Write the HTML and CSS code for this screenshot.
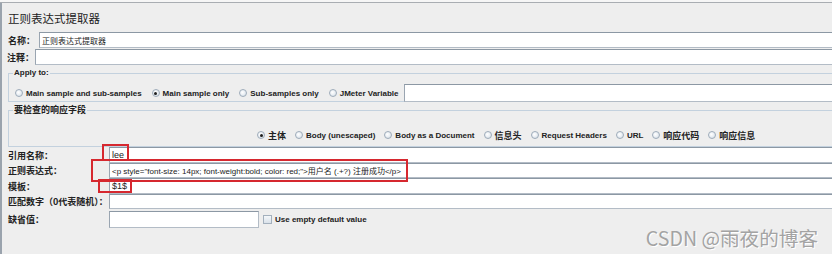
FILE: index.html
```html
<!DOCTYPE html>
<html>
<head>
<meta charset="utf-8">
<link rel="stylesheet" href="styles.css">
</head>
<body>
<div class="screen">
  <div class="topstrip"></div>
  <div class="panel">
    <div class="title">正则表达式提取器</div>
    <div class="row name-row">
      <span class="lbl cjk lbl-name">名称：</span>
      <div class="field"><span class="val-cjk">正则表达式提取器</span></div>
    </div>
    <div class="row comment-row">
      <span class="lbl cjk lbl-comment">注释：</span>
      <div class="field"></div>
    </div>

    <fieldset class="group group-apply">
      <legend class="legend-en">Apply to:</legend>
      <div class="radios radios-apply">
        <label class="opt"><span class="radio"></span><span class="txt">Main sample and sub-samples</span></label>
        <label class="opt"><span class="radio on"></span><span class="txt">Main sample only</span></label>
        <label class="opt"><span class="radio"></span><span class="txt">Sub-samples only</span></label>
        <label class="opt"><span class="radio"></span><span class="txt">JMeter Variable</span></label>
        <div class="field field-var"></div>
      </div>
    </fieldset>

    <fieldset class="group group-fields">
      <legend class="legend-cjk">要检查的响应字段</legend>
      <div class="radios radios-fields">
        <label class="opt"><span class="radio on"></span><span class="txt cjk">主体</span></label>
        <label class="opt"><span class="radio"></span><span class="txt">Body (unescaped)</span></label>
        <label class="opt"><span class="radio"></span><span class="txt">Body as a Document</span></label>
        <label class="opt"><span class="radio"></span><span class="txt cjk">信息头</span></label>
        <label class="opt"><span class="radio"></span><span class="txt">Request Headers</span></label>
        <label class="opt"><span class="radio"></span><span class="txt">URL</span></label>
        <label class="opt"><span class="radio"></span><span class="txt cjk">响应代码</span></label>
        <label class="opt"><span class="radio"></span><span class="txt cjk">响应信息</span></label>
      </div>
    </fieldset>

    <div class="form">
      <div class="frow r1"><span class="lbl cjk flbl">引用名称：</span><div class="field"><span class="val">lee</span></div></div>
      <div class="frow r2"><span class="lbl cjk flbl">正则表达式：</span><div class="field"><span class="val val-regex">&lt;p style="font-size: 14px; font-weight:bold; color: red;"&gt;用户名 (.+?) 注册成功&lt;/p&gt;</span></div></div>
      <div class="frow r3"><span class="lbl cjk flbl">模板：</span><div class="field"><span class="val">$1$</span></div></div>
      <div class="frow r4"><span class="lbl cjk flbl">匹配数字（0代表随机）：</span><div class="field"></div></div>
      <div class="frow r5"><span class="lbl cjk flbl">缺省值：</span><div class="field field-short"></div>
        <label class="chk"><span class="box"></span><span class="txt">Use empty default value</span></label>
      </div>
    </div>
  </div>

  <div class="mark mark-lee"></div>
  <div class="mark mark-regex"></div>
  <div class="mark mark-tpl"></div>

  <div class="watermark">CSDN @雨夜的博客</div>
</div>
</body>
</html>
```

FILE: styles.css
```css
html, body {
  margin: 0;
  padding: 0;
}
body {
  width: 832px;
  height: 254px;
  overflow: hidden;
  background: #eeeeee;
  font-family: "Liberation Sans", "Noto Sans CJK SC", sans-serif;
  color: #222;
}
.screen {
  position: relative;
  width: 832px;
  height: 254px;
  overflow: hidden;
}
.topstrip {
  height: 2px;
  background: #f6f6f6;
  border-bottom: 1px solid #a9adb2;
}
.panel {
  width: 1000px;
  height: 251px;
  border-left: 2px solid #9aa3ad;
  padding-left: 6px;
  box-sizing: border-box;
}
.title {
  height: 29px;
  display: flex;
  align-items: center;
  font-family: "Noto Sans CJK SC", sans-serif;
  font-size: 11.5px;
  color: #222;
}
.row {
  display: flex;
  align-items: center;
}
.cjk {
  font-family: "Noto Sans CJK SC", sans-serif;
}
.lbl {
  font-weight: bold;
  font-size: 9px;
  color: #222;
  flex: none;
}
.name-row {
  height: 16px;
}
.lbl-name {
  width: 31px;
}
.comment-row {
  height: 16px;
  margin-top: 1px;
}
.lbl-comment {
  width: 28px;
  margin-left: -1px;
}
.field {
  flex: 1;
  align-self: stretch;
  background: #fff;
  border: 1px solid #b3bcc6;
  border-top-color: #8c98a4;
  border-left-color: #9aa5b1;
  box-sizing: border-box;
  display: flex;
  align-items: center;
  padding-left: 2px;
  font-size: 9px;
  color: #222;
}
.val-cjk {
  font-family: "Noto Sans CJK SC", sans-serif;
  font-size: 8px;
}
.val {
  font-size: 9px;
  white-space: nowrap;
}
.val-regex {
  font-size: 8px;
}

.group {
  margin: 0;
  padding: 0;
  border: 1px solid #c3d1de;
  min-width: 0;
}
.group legend {
  margin-left: 4px;
  padding: 0 1px;
  font-weight: bold;
  line-height: 10px;
  color: #222;
}
.legend-en {
  font-size: 8px;
}
.legend-cjk {
  font-family: "Noto Sans CJK SC", sans-serif;
  font-size: 9px;
}
.group-apply {
  margin-top: 3px;
  height: 34px;
  box-sizing: border-box;
}
.radios {
  display: flex;
  align-items: center;
}
.radios-apply {
  height: 18px;
  margin-top: 6px;
  padding-left: 6px;
}
.opt {
  display: flex;
  align-items: center;
  margin-right: 10px;
  flex: none;
}
.txt {
  font-size: 8px;
  font-weight: bold;
  color: #222;
  white-space: nowrap;
}
.txt.cjk {
  font-size: 9px;
}
.radio {
  width: 8px;
  height: 8px;
  border-radius: 50%;
  border: 1px solid #9eacba;
  background: radial-gradient(circle at 40% 40%, #ffffff 0%, #e9eef3 50%, #cfd9e3 100%);
  box-sizing: border-box;
  position: relative;
  margin-right: 3px;
  flex: none;
}
.radio.on::after {
  content: "";
  position: absolute;
  left: 1.5px;
  top: 1.5px;
  width: 3px;
  height: 3px;
  border-radius: 50%;
  background: #1e1e1e;
}
.field-var {
  height: 18px;
  flex: 1;
  margin-left: -4px;
}
.group-fields {
  margin-top: 3px;
  height: 42px;
  box-sizing: border-box;
}
.radios-fields {
  height: 20px;
  margin-top: 10px;
  padding-left: 248px;
}
.radios-fields .opt {
  margin-right: 9px;
}

.form {
  display: flex;
  flex-direction: column;
}
.frow {
  display: flex;
  align-items: center;
}
.flbl {
  width: 101px;
}
.r1 { height: 16px; }
.r2 { height: 15px; }
.r3 { height: 16px; }
.r4 { height: 15px; }
.r5 { height: 17px; margin-top: 2px; }
.field-short {
  flex: none;
  width: 150px;
}
.chk {
  display: flex;
  align-items: center;
  margin-left: 4px;
}
.box {
  width: 9px;
  height: 9px;
  border: 1px solid #a3b0bd;
  background: linear-gradient(#f4f7fa, #d9e1e9);
  box-sizing: border-box;
  margin-right: 3px;
}

.mark {
  position: absolute;
  border: 2px solid #d6282f;
  box-sizing: border-box;
}
.mark-lee {
  left: 102px;
  top: 144px;
  width: 27px;
  height: 17px;
}
.mark-regex {
  left: 91px;
  top: 159px;
  width: 317px;
  height: 23px;
}
.mark-tpl {
  left: 98px;
  top: 179px;
  width: 34px;
  height: 14px;
}
.watermark {
  position: absolute;
  right: 14px;
  top: 223px;
  font-family: "Noto Sans CJK SC", sans-serif;
  font-size: 19.6px;
  color: #a3a3a3;
  text-shadow: 1px 1px 0 #ffffff;
  white-space: nowrap;
}
```
